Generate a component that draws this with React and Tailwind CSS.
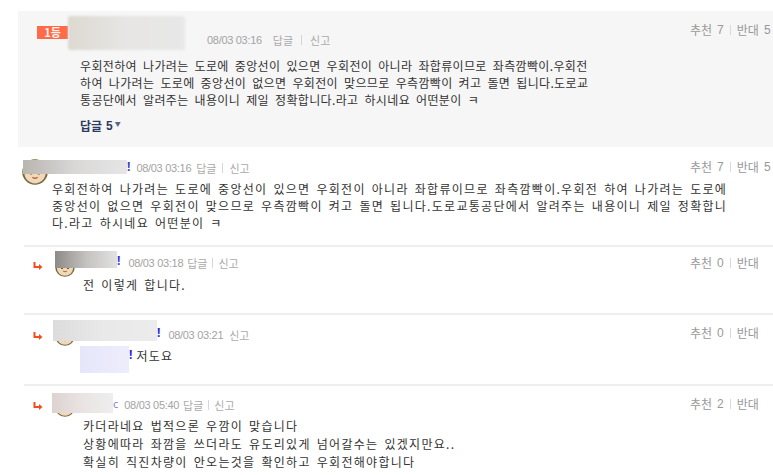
import React from "react";

const KR = "font-['Noto_Sans_CJK_KR','Noto_Sans',sans-serif]";
const BODY =
  "font-['Noto_Sans_CJK_KR','Noto_Sans',sans-serif] text-[12px] leading-[17px] text-[#333] tracking-[0.35px] [word-spacing:3px] whitespace-nowrap";
const BODY2 =
  "font-['Noto_Sans_CJK_KR','Noto_Sans',sans-serif] text-[12px] leading-[17px] text-[#333] tracking-[1.3px] [word-spacing:2px] whitespace-nowrap";

function Votes({ up, down, className = "" }) {
  return (
    <div className={"w-[110px] shrink-0 flex items-center h-[14px] text-[12px] text-[#999] " + KR + " " + className}>
      <span>추천</span>
      <span className="ml-[5px] font-['Liberation_Sans',sans-serif] text-[12px]">{up}</span>
      <span className="mx-[6px] w-px h-[10px] bg-[#d9d9d9]" />
      <span>반대</span>
      <span className="ml-[5px] font-['Liberation_Sans',sans-serif] text-[12px]">{down}</span>
    </div>
  );
}

function Meta({ time, reply = true, gap = "ml-[5px]", sepGap = "mx-[6px]" }) {
  return (
    <div className="flex items-center h-[14px] text-[#aaa]">
      <span className="font-['Liberation_Sans',sans-serif] text-[11px] tracking-[-0.3px] text-[#a3a3a3]">{time}</span>
      {reply && (
        <>
          <span className={gap + " text-[11px] " + KR}>답글</span>
          <span className={sepGap + " w-px h-[10px] bg-[#d6d6d6]"} />
        </>
      )}
      <span className={(reply ? "" : gap + " ") + "text-[11px] " + KR}>신고</span>
    </div>
  );
}

function Avatar({ size = 20 }) {
  return (
    <svg width={size} height={size} viewBox="0 0 20 20">
      <circle cx="10" cy="10" r="9.8" fill="#76683c" />
      <circle cx="10" cy="10.6" r="8.2" fill="#f1d8b8" />
      <path d="M2 8 Q10 1 18 8 L18 5 Q10 -2 2 5Z" fill="#4e3f25" />
      <circle cx="7" cy="11" r="1" fill="#3a2e22" />
      <circle cx="13" cy="11" r="1" fill="#3a2e22" />
      <path d="M8 14 q2 1.6 4 0" stroke="#b2653a" fill="none" strokeWidth="1" />
    </svg>
  );
}

function Arrow() {
  return (
    <svg width="10" height="9" viewBox="0 0 10 9" className="shrink-0">
      <path d="M1.5 0 V5 H6" stroke="#f04e1e" strokeWidth="2" fill="none" />
      <path d="M6 2 L9.5 5 L6 8 Z" fill="#f04e1e" />
    </svg>
  );
}

export default function App() {
  return (
    <div className="w-[773px] h-[475px] overflow-hidden bg-white">
      <div className="w-[800px] flex flex-col">
        {/* best comment */}
        <div className="mt-[11px] ml-[18px] h-[136px] bg-[#f6f6f6]">
          <div className="flex items-start pt-[5px]">
            <div className="ml-[19px] mt-[10px] w-[31px] h-[13px] bg-[#ff6a48] text-[#fff2ee] text-[11px] font-bold leading-[13px] text-center font-['Noto_Sans_CJK_KR',sans-serif]">
              1등
            </div>
            <div className="w-[117px] h-[34px] rounded-[2px] bg-gradient-to-r from-[#ddd9d2] via-[#e7e6e4] to-[#e8e8e8] blur-[1px]" />
            <div className="ml-[22px] mt-[17px]">
              <Meta time="08/03 03:16" gap="ml-[11px]" sepGap="mx-[8px]" />
            </div>
            <Votes up="7" down="5" className="ml-auto mt-[7px]" />
          </div>
          <div className={"pl-[62px] mt-[7px] " + BODY}>
            <div>우회전하여 나가려는 도로에 중앙선이 있으면 우회전이 아니라 좌합류이므로 좌측깜빡이.우회전</div>
            <div>하여 나가려는 도로에 중앙선이 없으면 우회전이 맞으므로 우측깜빡이 켜고 돌면 됩니다.도로교</div>
            <div>통공단에서 알려주는 내용이니 제일 정확합니다.라고 하시네요 어떤분이 ㅋ</div>
          </div>
          <div className="pl-[62px] mt-[11px] flex items-center h-[14px] text-[12px] font-bold text-[#2d3a62] font-['Noto_Sans_CJK_KR',sans-serif]">
            <span>답글</span>
            <span className="ml-[4px] font-['Liberation_Sans',sans-serif]">5</span>
            <span className="ml-[2px] text-[6px] text-[#5a6485] -mt-[5px]">▼</span>
          </div>
        </div>

        {/* comment */}
        <div className="pl-[22px] pt-[8px]">
          <div className="flex items-start">
            <div className="relative w-[105px] h-[30px]">
              <div className="pt-[4px]"><Avatar size={26} /></div>
              <div className="absolute left-[1px] top-[5px] w-[104px] h-[14px] bg-gradient-to-r from-[#b9b5b0] via-[#d9d8d7] to-[#e6e6e6]" />
            </div>
            <span className="mt-[5px] text-[12px] font-bold text-[#4040c8] leading-[14px]">!</span>
            <div className="ml-[6px] mt-[6px]">
              <Meta time="08/03 03:16" />
            </div>
            <Votes up="7" down="5" className="ml-auto mt-[5px]" />
          </div>
          <div className={"pl-[30px] -mt-[5px] " + BODY2}>
            <div>우회전하여 나가려는 도로에 중앙선이 있으면 우회전이 아니라 좌합류이므로 좌측깜빡이.우회전 하여 나가려는 도로에</div>
            <div>중앙선이 없으면 우회전이 맞으므로 우측깜빡이 켜고 돌면 됩니다.도로교통공단에서 알려주는 내용이니 제일 정확합니</div>
            <div>다.라고 하시네요 어떤분이 ㅋ</div>
          </div>
          <div className="ml-[2px] mt-[14px] border-t-2 border-[#efefef]" />
        </div>

        {/* reply 1 */}
        <div className="pl-[33px] pt-[4px]">
          <div className="flex items-start">
            <div className="mt-[11px]"><Arrow /></div>
            <div className="relative ml-[12px] w-[62px] h-[26px]">
              <div className="pt-[6px]"><Avatar size={20} /></div>
              <div className="absolute left-0 top-0 w-[62px] h-[17px] bg-gradient-to-r from-[#8e8a86] via-[#c4c2c0] to-[#e2e2e2]" />
            </div>
            <span className="mt-[3px] text-[12px] font-bold text-[#3a3ad0] leading-[14px]">!</span>
            <div className="ml-[8px] mt-[5px]">
              <Meta time="08/03 03:18" gap="ml-[4px]" sepGap="mx-[5px]" />
            </div>
            <Votes up="0" down="" className="ml-auto mt-[5px]" />
          </div>
          <div className={"pl-[50px] -mt-[1px] " + BODY2}>
            <div>전 이렇게 합니다.</div>
          </div>
          <div className="-ml-[9px] mt-[20px] border-t-2 border-[#efefef]" />
        </div>

        {/* reply 2 */}
        <div className="pl-[33px] pt-[5px]">
          <div className="flex items-start">
            <div className="mt-[12px]"><Arrow /></div>
            <div className="relative ml-[10px] w-[104px] h-[27px]">
              <div className="pl-[2px] pt-[6px]"><Avatar size={20} /></div>
              <div className="absolute left-0 top-0 w-[104px] h-[21px] bg-gradient-to-r from-[#dcdcdc] via-[#e9e9e9] to-[#ececec]" />
            </div>
            <span className="mt-[6px] text-[12px] font-bold text-[#2b2bd8] leading-[14px]">!</span>
            <div className="ml-[8px] mt-[8px]">
              <Meta time="08/03 03:21" reply={false} gap="ml-[6px]" />
            </div>
            <Votes up="0" down="" className="ml-auto mt-[6px]" />
          </div>
          <div className="pl-[47px] -mt-[1px] flex items-start">
            <div className="w-[49px] h-[27px] bg-gradient-to-r from-[#e6e6fb] to-[#ededfc]" />
            <span className="mt-[2px] text-[12px] font-bold text-[#2b2bd8] leading-[14px]">!</span>
            <span className={"ml-[4px] mt-[1px] " + BODY2}>저도요</span>
          </div>
          <div className="-ml-[9px] mt-[11px] border-t-2 border-[#efefef]" />
        </div>

        {/* reply 3 */}
        <div className="pl-[33px] pt-[7px]">
          <div className="flex items-start">
            <div className="mt-[9px]"><Arrow /></div>
            <div className="relative ml-[9px] w-[61px] h-[25px]">
              <div className="pl-[3px] pt-[4px]"><Avatar size={20} /></div>
              <div className="absolute left-0 top-0 w-[61px] h-[20px] bg-gradient-to-r from-[#ddd3d0] via-[#e9e4e3] to-[#eeeeee]" />
            </div>
            <span className="mt-[4px] text-[11px] text-[#8a7fd0] leading-[14px]">c</span>
            <div className="ml-[6px] mt-[5px]">
              <Meta time="08/03 05:40" gap="ml-[4px]" sepGap="mx-[5px]" />
            </div>
            <Votes up="2" down="" className="ml-auto mt-[4px]" />
          </div>
          <div className={"pl-[50px] -mt-[1px] " + BODY2 + " leading-[18px]"}>
            <div>카더라네요 법적으론 우깜이 맞습니다</div>
            <div>상황에따라 좌깜을 쓰더라도 유도리있게 넘어갈수는 있겠지만요..</div>
            <div>확실히 직진차량이 안오는것을 확인하고 우회전해야합니다</div>
          </div>
        </div>
      </div>
    </div>
  );
}
